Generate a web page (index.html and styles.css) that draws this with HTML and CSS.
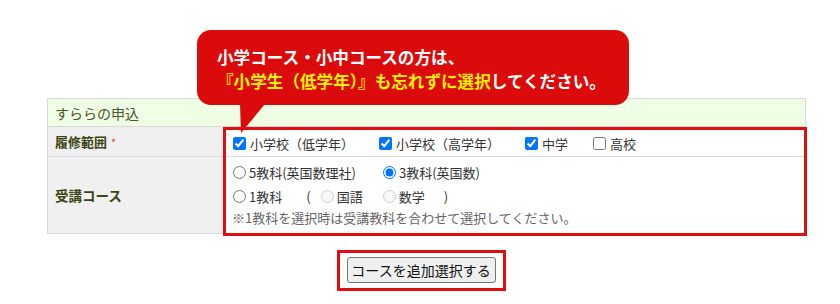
FILE: index.html
```html
<!DOCTYPE html>
<html lang="ja">
<head>
<meta charset="utf-8">
<title>すららの申込</title>
<link rel="stylesheet" href="styles.css">
</head>
<body>
<div class="page">
  <div class="bubble">
    <p>小学コース・小中コースの方は、</p>
    <p><span class="hl">『小学生（低学年）』も忘れずに選択</span>してください。</p>
  </div>
  <div class="form">
    <div class="head">すららの申込</div>
    <div class="label l1">履修範囲<span class="req">*</span></div>
    <div class="label l2">受講コース</div>
    <div class="fields">
      <div class="scope">
        <label class="item"><input type="checkbox" checked>小学校（低学年）</label>
        <label class="item"><input type="checkbox" checked>小学校（高学年）</label>
        <label class="item"><input type="checkbox" checked>中学</label>
        <label class="item"><input type="checkbox">高校</label>
      </div>
      <div class="course">
        <div class="line">
          <label class="item r1"><input type="radio" name="c">5教科(英国数理社)</label>
          <label class="item"><input type="radio" name="c" checked>3教科(英国数)</label>
        </div>
        <div class="line">
          <label class="item r2"><input type="radio" name="c">1教科</label>
          <span class="paren open">(</span>
          <label class="item r3"><input type="radio" disabled>国語</label>
          <label class="item"><input type="radio" disabled>数学</label>
          <span class="paren close">)</span>
        </div>
        <p class="note">※1教科を選択時は受講教科を合わせて選択してください。</p>
      </div>
    </div>
  </div>
  <div class="actions">
    <div class="btnbox"><button type="button">コースを追加選択する</button></div>
  </div>
</div>
</body>
</html>
```

FILE: styles.css
```css
* { box-sizing: border-box; }
html, body { margin: 0; padding: 0; background: #fff; }
body {
  font-family: "Noto Sans CJK JP", "Noto Sans", sans-serif;
  font-size: 13px;
  color: #333;
  width: 840px;
  height: 304px;
  overflow: hidden;
}
.page { position: relative; padding-top: 98px; }

.bubble {
  position: absolute;
  left: 197px;
  top: 30px;
  width: 432px;
  height: 75px;
  background: #dc0b0b;
  border-radius: 14px;
  padding: 15px 0 0 20px;
  color: #fff;
  font-weight: bold;
  font-size: 16.6px;
  line-height: 24px;
  z-index: 2;
}
.bubble p { margin: 0; white-space: nowrap; }
.bubble .hl { color: #fff200; }
.bubble::after {
  content: "";
  position: absolute;
  left: 43px;
  top: 74px;
  width: 25px;
  height: 29px;
  background: #dc0b0b;
  clip-path: polygon(0 0, 100% 0, 4% 100%);
}

.form {
  margin-left: 47px;
  width: 759px;
  border: 1px solid #d9d9d9;
  display: grid;
  grid-template-columns: 175px 1fr;
  grid-template-rows: 28px 30px 76px;
}
.head {
  grid-column: 1 / 3;
  background: #eeffe6;
  border-bottom: 1px solid #d9d9d9;
  color: #4b5626;
  padding-left: 7px;
  display: flex;
  align-items: center;
  font-size: 14px;
}
.label {
  grid-column: 1;
  background: #f0f0f0;
  color: #3c4514;
  font-weight: bold;
  padding-left: 7px;
  display: flex;
  align-items: center;
}
.l1 { grid-row: 2; border-bottom: 1px solid #d9d9d9; }
.l2 { grid-row: 3; font-size: 13.5px; }
.req { color: #e33; font-weight: normal; font-size: 11px; margin-left: 4px; align-self: flex-start; margin-top: 7px; }

.fields {
  grid-column: 2;
  grid-row: 2 / 4;
  border: 3px solid #e00f0f;
  margin: 0 -2px -3px 0;
  display: flex;
  flex-direction: column;
  background: #fff;
}
.scope {
  height: 27px;
  border-bottom: 1px solid #dcdcdc;
  display: flex;
  align-items: center;
  padding-left: 6px;
  gap: 24px;
}
.item { display: flex; align-items: center; white-space: nowrap; }
.item input { margin: 0 3px 0 1px; width: 13px; height: 13px; }
.scope .item input { margin-right: 4px; }

.course { padding: 3px 0 0 6px; }
.line { height: 24px; display: flex; align-items: center; }
.r1 { margin-right: 26px; }
.r2 { margin-right: 24px; }
.paren { display: inline-block; }
.open { margin-right: 9px; }
.r3 { margin-right: 19px; }
.close { margin-left: 19px; }
.course input[type="radio"] { margin-right: 3px; }
.note { margin: 0; height: 20px; line-height: 20px; color: #666; font-size: 13px; }

.actions { display: flex; justify-content: center; padding-top: 16px; padding-left: 2px; }
.btnbox { border: 3px solid #e00f0f; padding: 4px 7px 5px; }
.btnbox button {
  font-family: "Noto Sans CJK JP", "Noto Sans", sans-serif;
  font-size: 14px;
  width: 149px;
  height: 26px;
  padding: 0;
  color: #111;
  background: #efefef;
  border: 1px solid #767676;
  border-radius: 3px;
  line-height: 24px;
  white-space: nowrap;
}
```
